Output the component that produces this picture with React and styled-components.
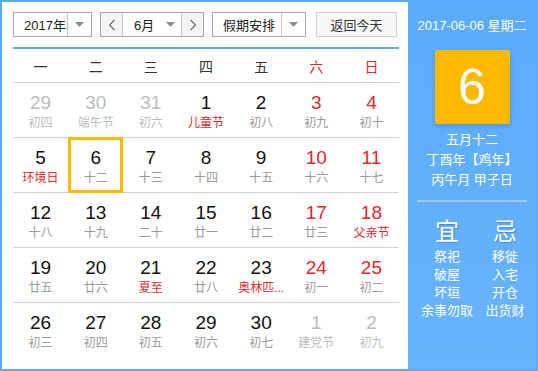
import React from "react";
import styled, { createGlobalStyle } from "styled-components";

const COLORS = {
  blue: "#5aabfb",
  red: "#e02828",
  faded: "#bbbbbb",
  lunar: "#999999",
  line: "#d2d2d2",
  orange: "#ffb900",
};

const CN = `"Liberation Sans", Arial, "Noto Sans CJK SC", sans-serif`;

const GlobalStyle = createGlobalStyle`
  body {
    margin: 0;
    font-family: ${CN};
  }
`;

const WEEKDAYS = ["一", "二", "三", "四", "五", "六", "日"];

// [day, lunar, kind] kind: n normal, w weekend (red number), f faded, h holiday lunar red, wh both red, s selected
const WEEKS = [
  [
    [29, "初四", "f"],
    [30, "端午节", "f"],
    [31, "初六", "f"],
    [1, "儿童节", "h"],
    [2, "初八", "n"],
    [3, "初九", "w"],
    [4, "初十", "w"],
  ],
  [
    [5, "环境日", "h"],
    [6, "十二", "s"],
    [7, "十三", "n"],
    [8, "十四", "n"],
    [9, "十五", "n"],
    [10, "十六", "w"],
    [11, "十七", "w"],
  ],
  [
    [12, "十八", "n"],
    [13, "十九", "n"],
    [14, "二十", "n"],
    [15, "廿一", "n"],
    [16, "廿二", "n"],
    [17, "廿三", "w"],
    [18, "父亲节", "wh"],
  ],
  [
    [19, "廿五", "n"],
    [20, "廿六", "n"],
    [21, "夏至", "h"],
    [22, "廿八", "n"],
    [23, "奥林匹...", "h"],
    [24, "初一", "w"],
    [25, "初二", "w"],
  ],
  [
    [26, "初三", "n"],
    [27, "初四", "n"],
    [28, "初五", "n"],
    [29, "初六", "n"],
    [30, "初七", "n"],
    [1, "建党节", "f"],
    [2, "初九", "f"],
  ],
];

const GOOD = ["祭祀", "破屋", "坏垣", "余事勿取"];
const BAD = ["移徙", "入宅", "开仓", "出货财"];

const Caret = () => (
  <svg width="9" height="5" viewBox="0 0 9 5">
    <path d="M0 0h9L4.5 5z" fill="#8c8c8c" />
  </svg>
);

const Chevron = ({ dir }) => (
  <svg width="8" height="12" viewBox="0 0 8 12">
    <polyline
      points={dir === "left" ? "6.5,1 1.5,6 6.5,11" : "1.5,1 6.5,6 1.5,11"}
      fill="none"
      stroke="#666"
      strokeWidth="1.1"
    />
  </svg>
);

const App = () => {
  return (
    <>
      <GlobalStyle />
      <Frame>
        <Main>
          <Toolbar>
            <Select width={79}>
              <SelectLabel pad={10}>2017年</SelectLabel>
              <SelectArrow>
                <Caret />
              </SelectArrow>
            </Select>
            <Select width={104}>
              <StepButton>
                <Chevron dir="left" />
              </StepButton>
              <SelectLabel pad={11}>6月</SelectLabel>
              <InlineArrow>
                <Caret />
              </InlineArrow>
              <StepButton right>
                <Chevron dir="right" />
              </StepButton>
            </Select>
            <Select width={94}>
              <SelectLabel pad={10}>假期安排</SelectLabel>
              <SelectArrow>
                <Caret />
              </SelectArrow>
            </Select>
            <TodayButton>返回今天</TodayButton>
          </Toolbar>

          <WeekHeader>
            {WEEKDAYS.map((d, i) => (
              <WeekDay key={d} weekend={i > 4}>
                {d}
              </WeekDay>
            ))}
          </WeekHeader>

          {WEEKS.map((week, wi) => (
            <WeekRow key={wi} last={wi === WEEKS.length - 1}>
              {week.map(([day, lunar, kind], di) => (
                <DayCell key={di} selected={kind === "s"}>
                  <DayNum kind={kind}>{day}</DayNum>
                  <Lunar kind={kind}>{lunar}</Lunar>
                </DayCell>
              ))}
            </WeekRow>
          ))}
        </Main>

        <Side>
          <DateLine>2017-06-06 星期二</DateLine>
          <BigDay>6</BigDay>
          <LunarInfo>
            <div>五月十二</div>
            <div>丁酉年【鸡年】</div>
            <div>丙午月 甲子日</div>
          </LunarInfo>
          <Divider />
          <Almanac>
            <AlmanacCol>
              <AlmanacTitle>宜</AlmanacTitle>
              {GOOD.map((t) => (
                <AlmanacItem key={t}>{t}</AlmanacItem>
              ))}
            </AlmanacCol>
            <AlmanacCol>
              <AlmanacTitle>忌</AlmanacTitle>
              {BAD.map((t) => (
                <AlmanacItem key={t}>{t}</AlmanacItem>
              ))}
            </AlmanacCol>
          </Almanac>
        </Side>
      </Frame>
    </>
  );
};

const Frame = styled.div`
  width: 538px;
  height: 371px;
  box-sizing: border-box;
  border: 2px solid ${COLORS.blue};
  display: flex;
  background: #fff;
`;

const Main = styled.div`
  width: 406px;
  box-sizing: border-box;
  padding: 10px 9px 0 11px;
  display: flex;
  flex-direction: column;
`;

const Toolbar = styled.div`
  display: flex;
  height: 25px;
  gap: 8px;
`;

const Select = styled.div`
  width: ${(p) => p.width}px;
  box-sizing: border-box;
  height: 25px;
  border: 1px solid #a8a8a8;
  display: flex;
  align-items: stretch;
  font-size: 13px;
  color: #222;
`;

const SelectLabel = styled.div`
  flex: 1;
  display: flex;
  align-items: center;
  padding-left: ${(p) => p.pad}px;
`;

const SelectArrow = styled.div`
  width: 23px;
  border-left: 1px solid #c8c8c8;
  display: flex;
  align-items: center;
  justify-content: center;
`;

const InlineArrow = styled.div`
  width: 22px;
  display: flex;
  align-items: center;
  justify-content: center;
`;

const StepButton = styled.div`
  width: 21px;
  background: #f4f4f4;
  display: flex;
  align-items: center;
  justify-content: center;
  border-left: ${(p) => (p.right ? "1px solid #c8c8c8" : "none")};
  border-right: ${(p) => (p.right ? "none" : "1px solid #c8c8c8")};
`;

const TodayButton = styled.div`
  margin-left: 2px;
  width: 81px;
  box-sizing: border-box;
  height: 25px;
  border: 1px solid #cfcfcf;
  background: #f7f7f7;
  display: flex;
  align-items: center;
  justify-content: center;
  font-size: 13px;
  color: #333;
`;

const WeekHeader = styled.div`
  margin-top: 10px;
  border-top: 2px solid ${COLORS.blue};
  border-bottom: 1px solid ${COLORS.line};
  display: grid;
  grid-template-columns: repeat(7, 1fr);
  height: 33px;
  align-items: center;
`;

const WeekDay = styled.div`
  text-align: center;
  font-size: 14px;
  color: ${(p) => (p.weekend ? COLORS.red : "#333")};
`;

const WeekRow = styled.div`
  display: grid;
  grid-template-columns: repeat(7, 1fr);
  height: 54px;
  border-bottom: ${(p) => (p.last ? "none" : `1px solid ${COLORS.line}`)};
`;

const DayCell = styled.div`
  position: relative;
  display: flex;
  flex-direction: column;
  align-items: center;
  padding-top: 10px;

  &::after {
    content: "";
    display: ${(p) => (p.selected ? "block" : "none")};
    position: absolute;
    inset: -1px 0 -1px 0;
    border: 3px solid ${COLORS.orange};
  }
`;

const numColor = (kind) => {
  if (kind === "f") return COLORS.faded;
  if (kind === "w" || kind === "wh") return COLORS.red;
  return "#111";
};

const lunarColor = (kind) => {
  if (kind === "f") return COLORS.faded;
  if (kind === "h" || kind === "wh") return COLORS.red;
  return COLORS.lunar;
};

const DayNum = styled.div`
  font-size: 19px;
  line-height: 20px;
  color: ${(p) => numColor(p.kind)};
`;

const Lunar = styled.div`
  margin-top: 2px;
  font-size: 12px;
  line-height: 16px;
  color: ${(p) => lunarColor(p.kind)};
  white-space: nowrap;
`;

const Side = styled.div`
  flex: 1;
  background: linear-gradient(#5aabfb, #68b4fb);
  display: flex;
  flex-direction: column;
  align-items: center;
  color: #fff;
  padding-top: 16px;
`;

const DateLine = styled.div`
  font-size: 13px;
  line-height: 16px;
`;

const BigDay = styled.div`
  margin-top: 16px;
  width: 75px;
  height: 74px;
  border-radius: 3px;
  background: ${COLORS.orange};
  box-shadow: 0 2px 4px rgba(0, 60, 130, 0.25);
  display: flex;
  align-items: center;
  justify-content: center;
  font-size: 50px;
  color: #fff;
`;

const LunarInfo = styled.div`
  margin-top: 6px;
  font-size: 13px;
  line-height: 20px;
  text-align: center;
`;

const Divider = styled.div`
  margin-top: 10px;
  width: 110px;
  height: 2px;
  background: #9ccbfc;
`;

const Almanac = styled.div`
  display: flex;
  gap: 4px;
  padding-left: 8px;
  margin-top: 15px;
`;

const AlmanacCol = styled.div`
  width: 54px;
  display: flex;
  flex-direction: column;
  align-items: center;
`;

const AlmanacTitle = styled.div`
  font-size: 24px;
  line-height: 30px;
  margin-bottom: 1px;
  text-shadow: 1px 1px 1px rgba(0, 40, 110, 0.3);
`;

const AlmanacItem = styled.div`
  font-size: 13px;
  line-height: 18px;
  white-space: nowrap;
`;

export default App;
